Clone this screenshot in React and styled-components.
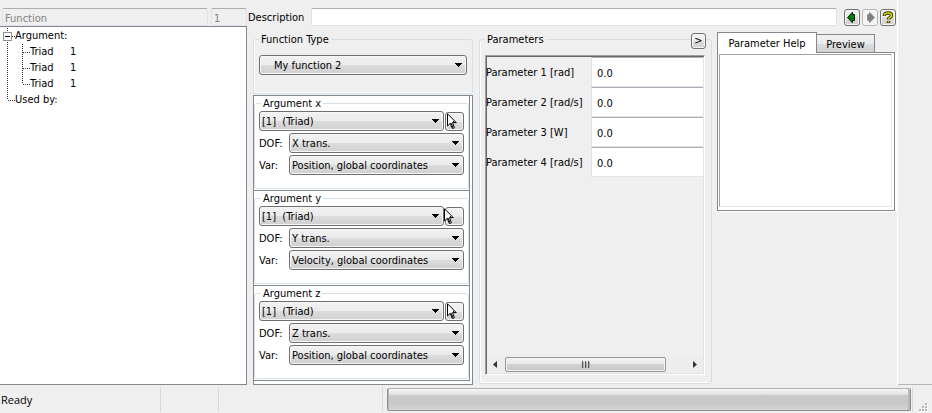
import React from "react";
import styled, { createGlobalStyle } from "styled-components";

const color = {
  face: "#efefef",
  frame: "#828790",
  group: "#d5dfe5",
  button: "#707070",
  fieldTop: "#abadb3",
  fieldSide: "#e2e3ea",
};

const uiFont = '"DejaVu Sans Condensed", "DejaVu Sans", sans-serif';

const GlobalStyle = createGlobalStyle`
  * { box-sizing: border-box; }
  body {
    margin: 0;
    background: ${color.face};
    color: #000;
    font: 11px/14px ${uiFont};
  }
  button, input, select { font: inherit; color: inherit; margin: 0; }
`;

const Window = styled.div`
  display: flex;
  flex-direction: column;
  min-height: 100vh;
`;

const Main = styled.div`
  flex: 1;
  display: flex;
`;

const Content = styled.main`
  flex: 1;
  min-width: 0;
  display: flex;
  flex-direction: column;
  border-right: 1px solid #fff;
`;

const Gutter = styled.div`
  width: 34px;
  border-bottom: 1px solid #b4b4b4;
`;

const TopBar = styled.header`
  display: flex;
  align-items: center;
  padding: 8px 1px 0 2px;
`;

const Field = styled.input`
  height: 18px;
  width: ${(p) => p.$width || "auto"};
  flex: ${(p) => (p.$width ? "none" : 1)};
  min-width: 0;
  padding: 2px 2px 0;
  border: 1px solid ${color.fieldSide};
  border-top-color: ${color.fieldTop};
  border-radius: 2px;
  outline: none;
  background: #fff;

  &:disabled {
    background: ${color.face};
    color: #838383;
  }
`;

const Spacer = styled.span`
  width: 3px;
`;

const DescriptionLabel = styled.label`
  width: 64px;
  padding: 2px 0 0 1px;
`;

const PushButton = styled.button`
  display: grid;
  place-items: center;
  padding: 0;
  border: 1px solid ${color.button};
  border-radius: 3px;
  background: linear-gradient(#f3f3f3, #ebebeb 50%, #dedede 50%, #d0d0d0);
  box-shadow: inset 0 0 0 1px #f8f8f8;
`;

const NavButtons = styled.div`
  display: flex;
  gap: 2px;
  margin-left: 7px;
`;

const NavButton = styled(PushButton)`
  width: 16px;
  height: 17px;

  &:disabled { border-color: #b4b4b4; background: #f4f4f4; }
`;

const Workspace = styled.div`
  flex: 1;
  display: flex;
  padding-right: 2px;
`;

const TreePanel = styled.div`
  width: 247px;
  padding-top: 1px;
  background: #fff;
  border: 1px solid ${color.frame};
  border-left: 0;
`;

const TreeList = styled.ul`
  margin: 0;
  padding: 0;
  list-style: none;
`;

const TreeRow = styled.div`
  display: flex;
  height: 16px;
  line-height: 16px;
`;

const TreeName = styled.span`
  width: ${(p) => (p.$child ? "40px" : "auto")};
`;

const FunctionColumn = styled.section`
  width: 220px;
  margin-left: 6px;
  padding-top: 6px;
  display: flex;
  flex-direction: column;
`;

const GroupBox = styled.fieldset`
  min-width: 0;
  margin: 0;
  padding: ${(p) => p.$padding};
  border: 1px solid ${color.group};
  border-radius: 3px;
  box-shadow: ${(p) => (p.$plain ? "none" : "inset 1px -1px #fff")};
`;

const GroupTitle = styled.legend`
  height: 14px;
  margin-left: ${(p) => p.$indent || 0};
  padding: 1px 2px 0;
`;

const SelectFrame = styled.span`
  flex: 1;
  min-width: 0;
  display: grid;
  align-items: center;

  > * { grid-area: 1 / 1; }
  > svg { justify-self: end; margin-right: 5px; pointer-events: none; }
`;

const SelectControl = styled.select`
  appearance: none;
  width: 100%;
  height: 20px;
  padding: 2px 20px 0 ${(p) => p.$indent || "2px"};
  border: 1px solid ${color.button};
  border-radius: 3px;
  outline: none;
  background: linear-gradient(#f2f2f2, #ebebeb 50%, #dddddd 50%, #cfcfcf);
  box-shadow: inset 0 0 0 1px #f6f6f6;
`;

const ArgumentPanel = styled.div`
  flex: 1;
  margin-top: 1px;
  padding: 0 2px 3px 0;
  border: 1px solid ${color.frame};
  background: #fff;
`;

const ArgumentCell = styled.div`
  padding-bottom: 1px;
  border: 1px solid ${color.frame};
  border-width: 0 1px 1px 0;
`;

const ArgumentRows = styled.div`
  display: flex;
  flex-direction: column;
  gap: 2px;
`;

const ArgumentRow = styled.div`
  display: flex;
  align-items: center;
`;

const RowLabel = styled.label`
  width: 30px;
  padding-top: 2px;
`;

const PickButton = styled(PushButton)`
  position: relative;
  width: 19px;
  height: 19px;
  margin-left: 1px;

  > svg {
    position: absolute;
    top: 0;
    left: ${(p) => (p.$shifted ? "-3px" : "0")};
  }
`;

const ParameterColumn = styled.section`
  position: relative;
  flex: 1;
  min-width: 0;
  margin-left: 6px;
  padding: 6px 0 1px;
  display: flex;

  > fieldset {
    flex: 1;
    display: flex;
  }
`;

const ExpandButton = styled(PushButton)`
  position: absolute;
  top: 7px;
  right: 6px;
  width: 15px;
  height: 16px;
`;

const ScrollArea = styled.div`
  flex: 1;
  min-width: 0;
  display: flex;
  flex-direction: column;
  justify-content: space-between;
  padding-top: 1px;
  border: 1px solid #a0a0a0;
  border-right-color: #fff;
  border-bottom-color: #fff;
  box-shadow: inset 1px 1px #696969, inset -1px -1px #e3e3e3;
`;

const ParameterRow = styled.div`
  display: grid;
  grid-template-columns: 105px 1fr;
  align-items: center;
  padding-right: 1px;
  white-space: nowrap;

  > label { padding-top: 2px; }
`;

const ParameterField = styled(Field)`
  height: 30px;
  width: 100%;
  padding: 2px 5px 0;
  border-right: 0;
  border-radius: 0;
`;

const ScrollBar = styled.div`
  display: grid;
  grid-template-columns: 18px 163fr 37fr;
  align-items: center;
  height: 17px;
  margin: 0 1px 1px;
  background: #ededed;
`;

const ScrollThumb = styled.div`
  display: grid;
  place-items: center;
  height: 15px;
  border: 1px solid #979797;
  border-radius: 2px;
  background: linear-gradient(#f4f4f4, #e6e6e6 50%, #d2d2d2 50%, #c8c8c8);
  box-shadow: inset 0 0 0 1px #f3f3f3;
`;

const ScrollArrow = styled.button`
  display: flex;
  justify-content: ${(p) => p.$side};
  padding: 0 6px;
  border: 0;
  background: none;
`;

const HelpColumn = styled.section`
  width: 178px;
  margin-left: 5px;
  padding-top: 6px;
`;

const TabList = styled.div`
  display: flex;
  align-items: flex-end;
`;

const Tab = styled.button`
  width: ${(p) => p.$width};
  height: ${(p) => (p.$active ? "21px" : "18px")};
  margin-bottom: ${(p) => (p.$active ? "-1px" : "0")};
  padding: 2px 0 0;
  border: 1px solid ${color.frame};
  border-bottom: 0;
  border-left-width: ${(p) => (p.$active ? "1px" : "0")};
  background: ${(p) => (p.$active ? "#fff" : "linear-gradient(#f2f2f2, #ebebeb 50%, #dddddd 50%, #d2d2d2)")};
  z-index: ${(p) => (p.$active ? 1 : 0)};
`;

const TabPanel = styled.div`
  height: 159px;
  padding: 1px 2px 3px 1px;
  border: 1px solid ${color.frame};
  background: #fff;
  box-shadow: 2px 1px #fff;
`;

const HelpText = styled.div`
  height: 100%;
  border: 1px solid #a0a0a0;
  border-right-color: #e8e8e8;
  border-bottom-color: #e8e8e8;
`;

const StatusBar = styled.footer`
  display: grid;
  grid-template-columns: 161px 58px 164px 1fr 15px;
  height: 28px;
  padding: 2px 4px 1px 0;
`;

const StatusCell = styled.div`
  display: flex;
  align-items: center;
  padding-left: 1px;
  border-right: 1px solid #d7d7d7;
  font-family: "Open Sans", sans-serif;
`;

const ProgressCell = styled.div`
  padding: 1px 1px 0 4px;
  border-right: 1px solid #d7d7d7;
`;

const ProgressTrack = styled.div`
  height: 23px;
  border: 1px solid #8e8e8e;
  border-top-color: #b2b2b2;
  border-radius: 2px;
  background: linear-gradient(#f6f6f6, #dedede 30%, #c9c9c9 31%, #c9c9c9 75%, #d6d6d6);
  box-shadow: inset 1px 0 #b8b8b8, inset -2px 0 #b8b8b8;
`;

const GripCell = styled.div`
  display: flex;
  align-items: flex-end;
  justify-content: flex-end;
`;

const DropArrow = () => (
  <svg width="8" height="4" shapeRendering="crispEdges" aria-hidden="true">
    <path d="M0 0H8L4 4Z" fill="#000" />
  </svg>
);

const Pointer = () => (
  <svg width="12" height="17" viewBox="0 0 12 17" aria-hidden="true">
    <path
      d="M1.5 .8V13L4.3 10.3L6.2 15.3Q7.5 16 8.4 14.7L6.5 9.6H10.3Z"
      fill="#fff"
      stroke="#000"
      strokeWidth="1"
    />
    <path d="M5 10L7.2 15M8.6 9.6L7 8" stroke="#000" strokeWidth="1" fill="none" />
  </svg>
);

const BackIcon = () => (
  <svg width="12" height="13" viewBox="0 0 12 13" aria-hidden="true">
    <path d="M1.5 6.5L6.5 1.2V3.5H8.5V9.5H6.5V11.8Z" fill="#008000" stroke="#001800" />
  </svg>
);

const ForwardIcon = () => (
  <svg width="12" height="13" viewBox="0 0 12 13" aria-hidden="true">
    <path d="M10.5 6.5L5.5 1.2V3.5H3.5V9.5H5.5V11.8Z" fill="#808080" stroke="#909090" />
  </svg>
);

const HelpIcon = () => (
  <svg width="12" height="13" viewBox="0 0 12 13" fill="none" aria-hidden="true">
    <path d="M2.4 5V4Q2.4 2 6 2Q9.4 2 9.4 4.4Q9.4 5.7 7.6 6.8Q6.5 7.4 6.5 8.6M6.5 10V12" stroke="#333300" strokeWidth="3.4" />
    <path d="M2.4 4.4V4Q2.4 2 6 2Q9.4 2 9.4 4.4Q9.4 5.7 7.6 6.8Q6.5 7.4 6.5 8.2M6.5 10.2V11.6" stroke="#d8d820" strokeWidth="1.6" />
  </svg>
);

const TreeLines = ({ level, last, box }) => (
  <svg width={level ? 30 : 15} height="16" shapeRendering="crispEdges" fill="none" aria-hidden="true">
    <g stroke="#303030" strokeDasharray="1 1">
      <path d={level || !last ? "M7.5 0V16" : "M7.5 0V8"} />
      {level === 0 && <path d="M8 8.5H15" />}
      {level === 1 && <path d={last ? "M22.5 0V8" : "M22.5 0V16"} />}
      {level === 1 && <path d="M23 8.5H30" />}
    </g>
    {box && <rect x="3.5" y="4.5" width="8" height="8" fill="#fff" stroke="#919191" />}
    {box && <path d="M5 8.5H10" stroke="#000" />}
  </svg>
);

const Grip = () => (
  <svg width="9" height="9" shapeRendering="crispEdges" aria-hidden="true">
    {[[6, 0], [3, 3], [6, 3], [0, 6], [3, 6], [6, 6]].map(([x, y]) => (
      <g key={`${x}-${y}`}>
        <rect x={x + 1} y={y + 1} width="2" height="2" fill="#fff" />
        <rect x={x} y={y} width="2" height="2" fill="#b8b8b8" />
      </g>
    ))}
  </svg>
);

const Select = ({ id, value, indent, label }) => (
  <SelectFrame>
    <SelectControl id={id} aria-label={label} defaultValue={value} $indent={indent}>
      <option value={value}>{value}</option>
    </SelectControl>
    <DropArrow />
  </SelectFrame>
);

const Argument = ({ name, dof, variable, shifted }) => (
  <ArgumentCell>
    <GroupBox $padding="1px 4px 13px" $plain>
      <GroupTitle $indent="2px">Argument {name}</GroupTitle>
      <ArgumentRows>
        <ArgumentRow>
          <Select label={`Argument ${name}`} value={"[1]\u00a0\u00a0(Triad)"} />
          <PickButton type="button" aria-label={`Pick argument ${name}`} $shifted={shifted}>
            <Pointer />
          </PickButton>
        </ArgumentRow>
        <ArgumentRow>
          <RowLabel htmlFor={`dof-${name}`}>DOF:</RowLabel>
          <Select id={`dof-${name}`} value={dof} />
        </ArgumentRow>
        <ArgumentRow>
          <RowLabel htmlFor={`var-${name}`}>Var:</RowLabel>
          <Select id={`var-${name}`} value={variable} />
        </ArgumentRow>
      </ArgumentRows>
    </GroupBox>
  </ArgumentCell>
);

const argumentList = [
  { name: "x", dof: "X trans.", variable: "Position, global coordinates" },
  { name: "y", dof: "Y trans.", variable: "Velocity, global coordinates", shifted: true },
  { name: "z", dof: "Z trans.", variable: "Position, global coordinates" },
];

const parameters = ["Parameter 1 [rad]", "Parameter 2 [rad/s]", "Parameter 3 [W]", "Parameter 4 [rad/s]"];

const triads = ["1", "1", "1"];

export default function App() {
  return (
    <Window>
      <GlobalStyle />
      <Main>
        <Content>
          <TopBar>
            <Field $width="206px" disabled defaultValue="Function" aria-label="Object type" />
            <Spacer />
            <Field $width="36px" disabled defaultValue="1" aria-label="Object id" />
            <DescriptionLabel htmlFor="description">Description</DescriptionLabel>
            <Field id="description" />
            <NavButtons>
              <NavButton type="button" aria-label="Back"><BackIcon /></NavButton>
              <NavButton type="button" aria-label="Forward" disabled><ForwardIcon /></NavButton>
              <NavButton type="button" aria-label="Help"><HelpIcon /></NavButton>
            </NavButtons>
          </TopBar>
          <Workspace>
            <TreePanel>
              <TreeList>
                <li>
                  <TreeRow><TreeLines level={0} box /><TreeName>Argument:</TreeName></TreeRow>
                  <TreeList>
                    {triads.map((id, i) => (
                      <li key={i}>
                        <TreeRow>
                          <TreeLines level={1} last={i === triads.length - 1} />
                          <TreeName $child>Triad</TreeName>
                          <span>{id}</span>
                        </TreeRow>
                      </li>
                    ))}
                  </TreeList>
                </li>
                <li>
                  <TreeRow><TreeLines level={0} last /><TreeName>Used by:</TreeName></TreeRow>
                </li>
              </TreeList>
            </TreePanel>

            <FunctionColumn>
              <GroupBox $padding="9px 5px 18px">
                <GroupTitle>Function Type</GroupTitle>
                <Select label="Function Type" value="My function 2" indent="14px" />
              </GroupBox>
              <ArgumentPanel>
                {argumentList.map((a) => <Argument key={a.name} {...a} />)}
              </ArgumentPanel>
            </FunctionColumn>

            <ParameterColumn>
              <GroupBox $padding="9px 6px 8px 5px">
                <GroupTitle>Parameters</GroupTitle>
                <ScrollArea>
                  <div>
                    {parameters.map((name, i) => (
                      <ParameterRow key={name}>
                        <label htmlFor={`parameter-${i}`}>{name}</label>
                        <ParameterField id={`parameter-${i}`} defaultValue="0.0" />
                      </ParameterRow>
                    ))}
                  </div>
                  <ScrollBar>
                    <ScrollArrow type="button" aria-label="Scroll left" $side="flex-start">
                      <svg width="4" height="7"><path d="M4 0V7L0 3.5Z" fill="#333" /></svg>
                    </ScrollArrow>
                    <ScrollThumb>
                      <svg width="8" height="7" shapeRendering="crispEdges">
                        <path d="M.5 0V7M3.5 0V7M6.5 0V7" stroke="#555" />
                        <path d="M1.5 1V7M4.5 1V7M7.5 1V7" stroke="#b0b0b0" />
                      </svg>
                    </ScrollThumb>
                    <ScrollArrow type="button" aria-label="Scroll right" $side="flex-end">
                      <svg width="4" height="7"><path d="M0 0V7L4 3.5Z" fill="#333" /></svg>
                    </ScrollArrow>
                  </ScrollBar>
                </ScrollArea>
              </GroupBox>
              <ExpandButton type="button">&gt;</ExpandButton>
            </ParameterColumn>

            <HelpColumn>
              <TabList role="tablist">
                <Tab type="button" role="tab" aria-selected="true" $active $width="100px">Parameter Help</Tab>
                <Tab type="button" role="tab" aria-selected="false" $width="58px">Preview</Tab>
              </TabList>
              <TabPanel role="tabpanel">
                <HelpText />
              </TabPanel>
            </HelpColumn>
          </Workspace>
        </Content>
        <Gutter />
      </Main>
      <StatusBar>
        <StatusCell>Ready</StatusCell>
        <StatusCell />
        <StatusCell />
        <ProgressCell>
          <ProgressTrack role="progressbar" aria-label="Progress" />
        </ProgressCell>
        <GripCell><Grip /></GripCell>
      </StatusBar>
    </Window>
  );
}
